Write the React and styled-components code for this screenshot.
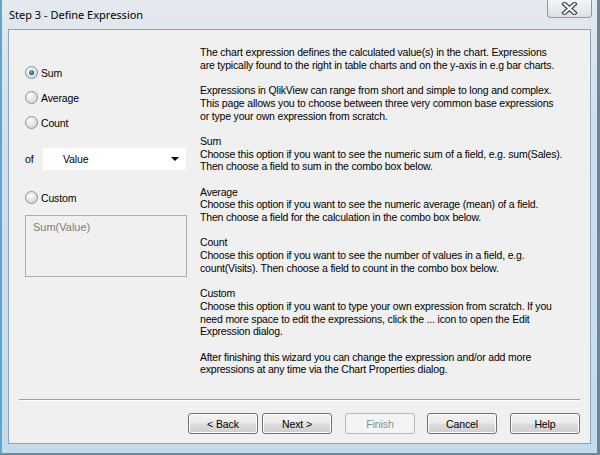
import React from "react";
import styled, { createGlobalStyle } from "styled-components";

const Global = createGlobalStyle`
  html, body { margin: 0; padding: 0; background: #ffffff; }
  body { width: 600px; height: 455px; overflow: hidden; }
`;

const Window = styled.div`
  width: 600px;
  height: 455px;
  box-sizing: border-box;
  display: flex;
  flex-direction: column;
  background: linear-gradient(180deg, #e4eaf0 0px, #dfe6ec 30px, #cfe0ee 120px, #c4dbee 100%);
  border-left: 2px solid #5fa6c9;
  border-right: 3px solid #6e8596;
  border-bottom: 2px solid #6f8797;
  padding: 0 6px 9px 6px;
  font-family: "Liberation Sans", Arial, sans-serif;
  overflow: hidden;
`;

const TitleBar = styled.div`
  height: 29px;
  flex: none;
  display: flex;
  align-items: flex-start;
  justify-content: space-between;
`;

const Title = styled.div`
  font-family: "Noto Sans", "Open Sans", sans-serif;
  font-size: 11px;
  color: #000;
  padding-top: 7px;
  padding-left: 1px;
`;

const CloseButton = styled.div`
  width: 45px;
  height: 18px;
  margin-right: -1px;
  box-sizing: border-box;
  border: 1px solid #8f9aa6;
  border-top: none;
  border-radius: 0 0 4px 4px;
  background: linear-gradient(180deg, #f2f4f6 0%, #e8ecef 50%, #dbe1e6 100%);
  display: flex;
  align-items: center;
  justify-content: center;
`;

const Client = styled.div`
  flex: 1;
  background: #f0f0f0;
  border: 1px solid #8fa3b6;
  display: flex;
  flex-direction: column;
  min-height: 0;
  overflow: hidden;
`;

const Content = styled.div`
  flex: 1;
  display: flex;
  padding: 16px 0 0 16px;
  gap: 13px;
  min-height: 0;
`;

const LeftColumn = styled.div`
  width: 162px;
  display: flex;
  flex-direction: column;
  padding-top: 20px;
  font-size: 10.5px;
  letter-spacing: -0.15px;
`;

const RadioRow = styled.label`
  display: flex;
  align-items: center;
  height: 13px;
  gap: 3px;
  margin-bottom: ${(p) => p.$mb ?? 12}px;
  color: #000;
`;

const RadioCircle = styled.span`
  width: 11px;
  height: 11px;
  border-radius: 50%;
  border: 1px solid #8c8f93;
  background: radial-gradient(circle at 40% 35%, #ffffff 0%, #e6e6e6 45%, #c9c9c9 100%);
  display: flex;
  align-items: center;
  justify-content: center;
  flex: none;
`;

const RadioDot = styled.span`
  width: 5px;
  height: 5px;
  border-radius: 50%;
  background: radial-gradient(circle at 40% 35%, #6fb2cf 0%, #1d6b8d 60%, #154c66 100%);
`;

const OfRow = styled.div`
  display: flex;
  align-items: center;
  gap: 8px;
  margin-bottom: 21px;
`;

const OfLabel = styled.span`
  width: 10px;
`;

const Combo = styled.div`
  width: 143px;
  height: 22px;
  background: #ffffff;
  display: flex;
  align-items: center;
  justify-content: space-between;
  padding: 0 7px 0 20px;
  box-sizing: border-box;
  color: #000;
`;

const ComboArrow = styled.span`
  width: 0;
  height: 0;
  border-left: 4px solid transparent;
  border-right: 4px solid transparent;
  border-top: 4px solid #000;
`;

const ExprBox = styled.div`
  margin-top: 11px;
  width: 162px;
  height: 62px;
  box-sizing: border-box;
  border: 1px solid #adadad;
  background: #f0f0f0;
  padding: 5px 7px;
  font-size: 11px;
  letter-spacing: 0;
  color: #7d7d7d;
`;

const Help = styled.div`
  width: 380px;
  font-size: 10.5px;
  letter-spacing: -0.18px;
  line-height: 12.7px;
  color: #000;
  white-space: nowrap;
`;

const Para = styled.p`
  margin: 0 0 12.7px 0;
`;

const Separator = styled.div`
  height: 1px;
  flex: none;
  background: #a0a0a0;
  border-bottom: 1px solid #ffffff;
  margin: 0 10px 12px 10px;
`;

const ButtonRow = styled.div`
  display: flex;
  flex: none;
  justify-content: flex-end;
  padding: 0 10px 9px 0;
`;

const Button = styled.div`
  width: 70px;
  height: 21px;
  box-sizing: border-box;
  margin-left: ${(p) => p.$ml || 0}px;
  border: 1px solid ${(p) => (p.$disabled ? "#b5b9bc" : "#707070")};
  border-radius: 3px;
  background: ${(p) =>
    p.$disabled
      ? "#f4f4f4"
      : "linear-gradient(180deg, #f2f2f2 0%, #ebebeb 48%, #dddddd 52%, #cfcfcf 100%)"};
  box-shadow: inset 0 0 0 1px ${(p) => (p.$disabled ? "#f4f4f4" : "#fcfcfc")};
  color: ${(p) => (p.$disabled ? "#8a8a8a" : "#000")};
  font-size: 10.5px;
  letter-spacing: -0.1px;
  display: flex;
  align-items: center;
  justify-content: center;
`;

function Radio({ checked, label, mb }) {
  return (
    <RadioRow $mb={mb}>
      <RadioCircle>{checked && <RadioDot />}</RadioCircle>
      {label}
    </RadioRow>
  );
}

export default function App() {
  return (
    <>
      <Global />
      <Window>
        <TitleBar>
          <Title>Step 3 - Define Expression</Title>
          <CloseButton>
            <svg width="17" height="13" viewBox="0 0 17 13">
              <path d="M3.5 2 L13.5 11 M13.5 2 L3.5 11" stroke="#3c4650" strokeWidth="4.5" strokeLinecap="square" />
              <path d="M3.5 2 L13.5 11 M13.5 2 L3.5 11" stroke="#ffffff" strokeWidth="2.2" strokeLinecap="square" />
            </svg>
          </CloseButton>
        </TitleBar>
        <Client>
          <Content>
            <LeftColumn>
              <Radio checked label="Sum" />
              <Radio label="Average" />
              <Radio label="Count" mb={19} />
              <OfRow>
                <OfLabel>of</OfLabel>
                <Combo>
                  Value
                  <ComboArrow />
                </Combo>
              </OfRow>
              <Radio label="Custom" mb={0} />
              <ExprBox>Sum(Value)</ExprBox>
            </LeftColumn>
            <Help>
              <Para>
                The chart expression defines the calculated value(s) in the chart. Expressions
                <br />
                are typically found to the right in table charts and on the y-axis in e.g bar charts.
              </Para>
              <Para>
                Expressions in QlikView can range from short and simple to long and complex.
                <br />
                This page allows you to choose between three very common base expressions
                <br />
                or type your own expression from scratch.
              </Para>
              <Para>
                Sum
                <br />
                Choose this option if you want to see the numeric sum of a field, e.g. sum(Sales).
                <br />
                Then choose a field to sum in the combo box below.
              </Para>
              <Para>
                Average
                <br />
                Choose this option if you want to see the numeric average (mean) of a field.
                <br />
                Then choose a field for the calculation in the combo box below.
              </Para>
              <Para>
                Count
                <br />
                Choose this option if you want to see the number of values in a field, e.g.
                <br />
                count(Visits). Then choose a field to count in the combo box below.
              </Para>
              <Para>
                Custom
                <br />
                Choose this option if you want to type your own expression from scratch. If you
                <br />
                need more space to edit the expressions, click the ... icon to open the Edit
                <br />
                Expression dialog.
              </Para>
              <Para>
                After finishing this wizard you can change the expression and/or add more
                <br />
                expressions at any time via the Chart Properties dialog.
              </Para>
            </Help>
          </Content>
          <Separator />
          <ButtonRow>
            <Button>&lt; Back</Button>
            <Button $ml={4}>Next &gt;</Button>
            <Button $ml={13} $disabled>Finish</Button>
            <Button $ml={12}>Cancel</Button>
            <Button $ml={13}>Help</Button>
          </ButtonRow>
        </Client>
      </Window>
    </>
  );
}
